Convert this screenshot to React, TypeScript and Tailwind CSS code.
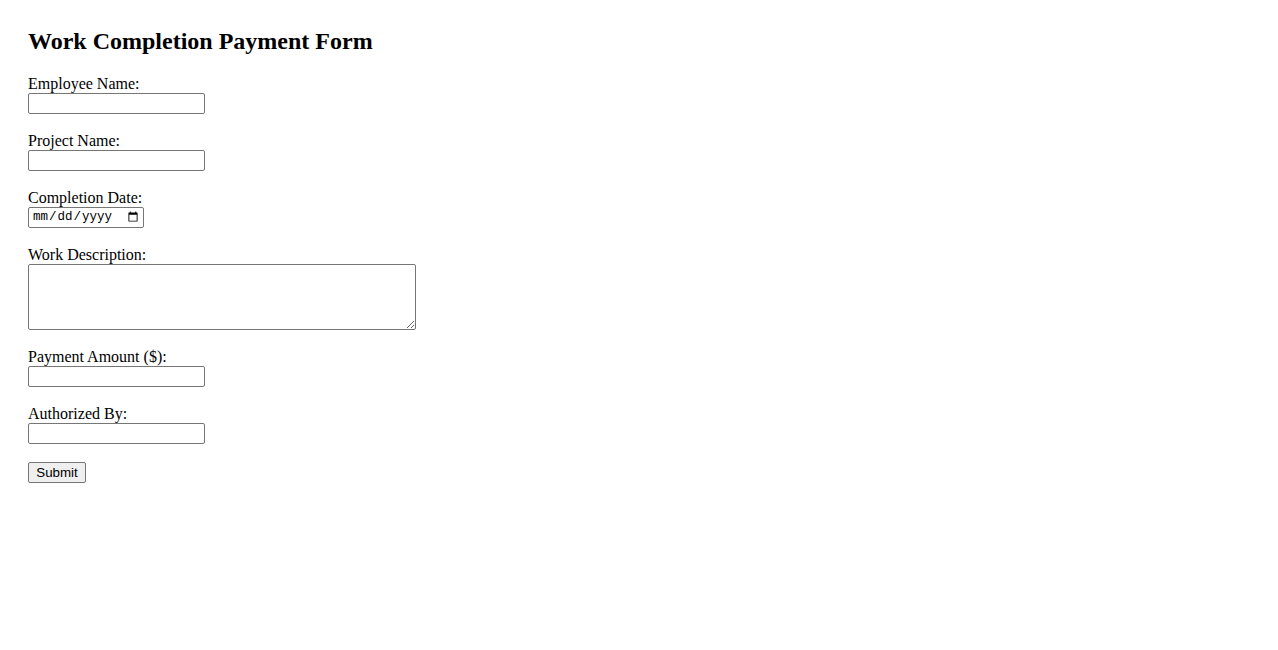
import * as React from 'react';

const fieldClass =
    'block w-[177px] h-[21px] border border-[#767676] rounded-[2px] bg-white px-[2px] text-[13.33px] font-["Liberation_Sans",Arial,sans-serif] outline-none';

const labelClass = 'block h-[18px] leading-[18px] text-[16px]';

const App: React.FC = () => {
    const [form, setForm] = React.useState({
        employee: '',
        project: '',
        date: '',
        description: '',
        amount: '',
        authorizedBy: '',
    });

    const update = (key: keyof typeof form) => (e: React.ChangeEvent<HTMLInputElement | HTMLTextAreaElement>) =>
        setForm({ ...form, [key]: e.target.value });

    return (
        <div className='min-h-screen bg-white text-black pl-[28px] pt-[28px] font-["Liberation_Serif","Times_New_Roman",serif]'>
            <h2 className="text-[24px] leading-[27px] font-bold">Work Completion Payment Form</h2>

            <form className="mt-[20px] flex flex-col gap-[18px]" onSubmit={(e) => e.preventDefault()}>
                <div>
                    <label htmlFor="employee" className={labelClass}>Employee Name:</label>
                    <input id="employee" type="text" className={fieldClass} value={form.employee} onChange={update('employee')} />
                </div>

                <div>
                    <label htmlFor="project" className={labelClass}>Project Name:</label>
                    <input id="project" type="text" className={fieldClass} value={form.project} onChange={update('project')} />
                </div>

                <div>
                    <label htmlFor="date" className={labelClass}>Completion Date:</label>
                    <input
                        id="date"
                        type="date"
                        className='block w-[116px] h-[21px] border border-[#767676] rounded-[2px] bg-white pl-[3px] pr-[2px] text-[12.5px] font-["Liberation_Mono",monospace] outline-none'
                        value={form.date}
                        onChange={update('date')}
                    />
                </div>

                <div>
                    <label htmlFor="description" className={labelClass}>Work Description:</label>
                    <textarea
                        id="description"
                        className='block w-[388px] h-[66px] border border-[#767676] rounded-[2px] bg-white p-[2px] text-[13.33px] font-["Liberation_Mono",monospace] outline-none'
                        value={form.description}
                        onChange={update('description')}
                    />
                </div>

                <div>
                    <label htmlFor="amount" className={labelClass}>Payment Amount ($):</label>
                    <input id="amount" type="number" className={fieldClass} value={form.amount} onChange={update('amount')} />
                </div>

                <div>
                    <label htmlFor="authorized" className={labelClass}>Authorized By:</label>
                    <input id="authorized" type="text" className={fieldClass} value={form.authorizedBy} onChange={update('authorizedBy')} />
                </div>

                <div>
                    <button
                        type="submit"
                        className='block w-[58px] h-[21px] border border-[#767676] rounded-[2px] bg-[#efefef] text-[13.33px] leading-[19px] font-["Liberation_Sans",Arial,sans-serif] text-black'
                    >
                        Submit
                    </button>
                </div>
            </form>
        </div>
    );
};

export default App;
